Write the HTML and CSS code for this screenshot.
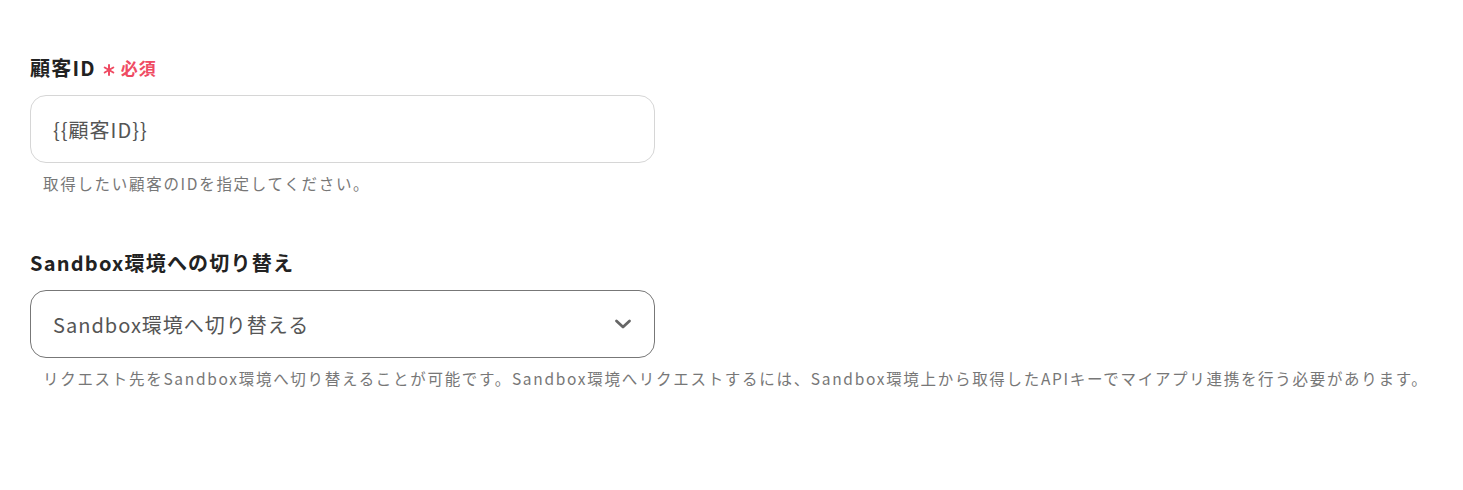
FILE: index.html
```
<!DOCTYPE html>
<html>
<head>
	<meta charset="UTF-8">
	<link rel="stylesheet" href="styles.css">
</head>
<body>
	<div class="form">
		<div class="field">
			<label class="field-label">顧客ID<svg class="req-mark" width="12" height="12" viewBox="0 0 12 12"><g stroke="#ef4b63" stroke-width="2" stroke-linecap="round"><path d="M6 1 V11"/><path d="M1.7 3.5 L10.3 8.5"/><path d="M1.7 8.5 L10.3 3.5"/></g></svg><span class="req-text">必須</span></label>
			<div class="text-input">{{顧客ID}}</div>
			<p class="field-help">取得したい顧客のIDを指定してください。</p>
		</div>
		<div class="field">
			<label class="field-label">Sandbox環境への切り替え</label>
			<div class="select-input">
				<span>Sandbox環境へ切り替える</span>
				<svg class="chevron" width="20" height="20" viewBox="0 0 20 20"><path d="M3.5 7 L10 13 L16.5 7" fill="none" stroke="#666" stroke-width="2.8" stroke-linecap="round" stroke-linejoin="round"/></svg>
			</div>
			<p class="field-help">リクエスト先をSandbox環境へ切り替えることが可能です。Sandbox環境へリクエストするには、Sandbox環境上から取得したAPIキーでマイアプリ連携を行う必要があります。</p>
		</div>
	</div>
</body>
</html>
```

FILE: styles.css
```
body {
	margin: 0;
	background: #fff;
	font-family: "Noto Sans CJK JP", "Noto Sans", sans-serif;
	color: #222;
}

.form {
	padding: 52px 30px 0 30px;
}

.field {
	margin-bottom: 53px;
}

.field-label {
	display: flex;
	align-items: center;
	font-size: 20px;
	letter-spacing: 1.2px;
	font-weight: bold;
	color: #222;
	height: 30px;
	margin-bottom: 13px;
}

.req-mark {
	margin: 5px 6px 0 7px;
}

.req-text {
	color: #ef4b63;
	font-size: 17px;
	letter-spacing: 1px;
}

.text-input,
.select-input {
	box-sizing: border-box;
	width: 625px;
	height: 68px;
	border-radius: 16px;
	padding: 0 22px;
	display: flex;
	align-items: center;
	font-size: 20px;
	letter-spacing: 1px;
	color: #555;
}

.text-input {
	border: 1px solid #d6d6d6;
}

.select-input {
	border: 1px solid #777;
	justify-content: space-between;
	padding-right: 21px;
}

.field-help {
	margin: 9px 0 0 13px;
	font-size: 15.5px;
	letter-spacing: 1.7px;
	color: #777;
}
```
